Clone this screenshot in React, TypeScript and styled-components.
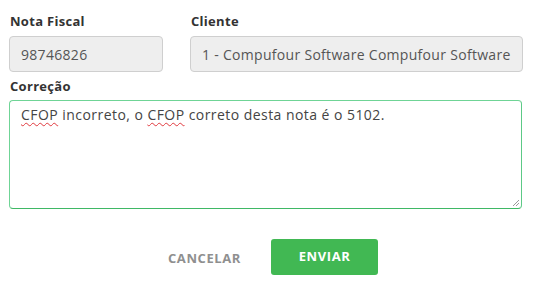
import React from "react";
import styled, { createGlobalStyle } from "styled-components";

const GlobalStyle = createGlobalStyle`
  html, body {
    margin: 0;
    padding: 0;
    background: #ffffff;
  }
  body {
    font-family: "Open Sans", "Liberation Sans", sans-serif;
  }
`;

const Form = styled.div`
  width: 533px;
  height: 282px;
  box-sizing: border-box;
  padding: 13px 11px 0 9px;
  display: flex;
  flex-direction: column;
`;

const Row = styled.div`
  display: flex;
  gap: 27px;
`;

const Field = styled.div<{ grow?: boolean }>`
  display: flex;
  flex-direction: column;
  width: ${({ grow }) => (grow ? "auto" : "154px")};
  flex: ${({ grow }) => (grow ? 1 : "none")};
`;

const Label = styled.label`
  font-size: 13px;
  font-weight: 700;
  letter-spacing: 0.3px;
  color: #333333;
  line-height: 16px;
  padding-left: 1px;
  margin-bottom: 7px;
`;

const ReadOnlyInput = styled.div`
  height: 36px;
  box-sizing: border-box;
  border: 1px solid #cfcfcf;
  border-radius: 4px;
  background: #eeeeee;
  color: #555555;
  font-size: 14px;
  letter-spacing: 0.3px;
  padding: 0 11px;
  display: flex;
  align-items: center;
  white-space: nowrap;
  overflow: hidden;
`;

const AreaField = styled.div`
  display: flex;
  flex-direction: column;
  margin-top: 6px;
`;

const TextArea = styled.div`
  position: relative;
  height: 109px;
  box-sizing: border-box;
  border: 1px solid #6fd496;
  border-bottom-color: #3fb865;
  border-right-color: #5cc986;
  border-radius: 4px;
  padding: 5px 11px;
  font-size: 14px;
  letter-spacing: 0.45px;
  color: #444444;
  line-height: 18px;
  margin-top: -1px;
`;

const Misspelled = styled.span`
  text-decoration: underline wavy #e0393e;
  text-decoration-thickness: 1px;
  text-underline-offset: 2px;
`;

const Grip = styled.svg`
  position: absolute;
  right: 1px;
  bottom: 1px;
`;

const Actions = styled.div`
  display: flex;
  justify-content: center;
  align-items: center;
  gap: 30px;
  margin-top: 30px;
  padding-left: 15px;
`;

const GhostButton = styled.button`
  border: none;
  background: transparent;
  font-family: inherit;
  font-size: 13px;
  font-weight: 700;
  color: #8f8f8f;
  letter-spacing: 0.6px;
  padding: 0;
  margin-top: 2px;
`;

const PrimaryButton = styled.button`
  width: 107px;
  height: 36px;
  border: none;
  border-radius: 3px;
  background: #41b853;
  color: #ffffff;
  font-family: inherit;
  font-size: 13px;
  font-weight: 700;
  letter-spacing: 0.6px;
  padding: 0 0 3px;
`;

export default function App() {
  return (
    <>
      <GlobalStyle />
      <Form>
        <Row>
          <Field>
            <Label>Nota Fiscal</Label>
            <ReadOnlyInput>98746826</ReadOnlyInput>
          </Field>
          <Field grow>
            <Label>Cliente</Label>
            <ReadOnlyInput>1 - Compufour Software Compufour Software</ReadOnlyInput>
          </Field>
        </Row>
        <AreaField>
          <Label>Correção</Label>
          <TextArea>
            <Misspelled>CFOP</Misspelled> incorreto, o <Misspelled>CFOP</Misspelled> correto desta nota é o 5102.
            <Grip width="9" height="9" viewBox="0 0 9 9">
              <path d="M8 2 L2 8 M8 5 L5 8" stroke="#9a9a9a" strokeWidth="1" />
            </Grip>
          </TextArea>
        </AreaField>
        <Actions>
          <GhostButton>CANCELAR</GhostButton>
          <PrimaryButton>ENVIAR</PrimaryButton>
        </Actions>
      </Form>
    </>
  );
}
